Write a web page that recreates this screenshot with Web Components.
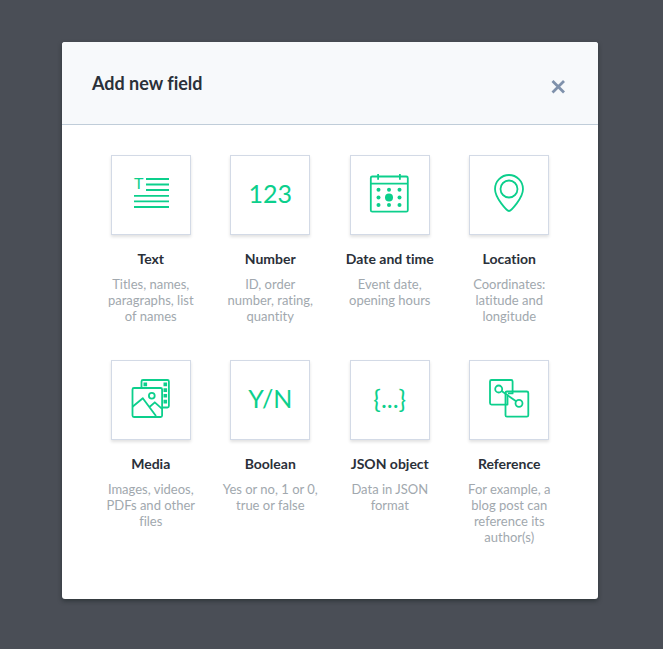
<!DOCTYPE html>
<html lang="en">
<head>
<meta charset="utf-8">
<meta name="viewport" content="width=device-width, initial-scale=1">
<title>Add new field</title>
<style>
	body {
		margin: 0;
		min-height: 100vh;
		background: #4a4e56;
		font-family: Lato, "Liberation Sans", sans-serif;
		font-variant-ligatures: none;
	}
	svg {
		display: block;
		width: 48px;
		height: 48px;
		fill: none;
		stroke: #0ccf8c;
		stroke-width: 1.8;
		stroke-linejoin: round;
	}
	svg .solid {
		fill: #0ccf8c;
		stroke: none;
	}
	svg text {
		font-size: 16px;
		font-weight: 400;
	}
</style>
</head>
<body>
<modal-dialog heading="Add new field">
	<field-grid>
		<field-type label="Text" description="Titles, names, paragraphs, list of names">
			<svg viewBox="16 16 48 48" aria-hidden="true">
				<text class="solid" x="23" y="34">T</text>
				<path d="M35 24h23M35 29.5h23M35 35h23M23 40.8h35M23 46.4h35M23 52h35"/>
			</svg>
		</field-type>
		<field-type label="Number" description="ID, order number, rating, quantity"><field-sign>123</field-sign></field-type>
		<field-type label="Date and time" description="Event date, opening hours">
			<svg viewBox="16.5 16 48 48" aria-hidden="true">
				<rect x="21.3" y="21.5" width="37" height="35.2" rx="1.5"/>
				<path d="M21.3 28.7h37M28.6 19v5.8M50.4 19v5.8"/>
				<g class="solid">
					<circle cx="29" cy="34.7" r="2"/>
					<circle cx="39.5" cy="34.7" r="2"/>
					<circle cx="50" cy="34.7" r="2"/>
					<circle cx="29" cy="42.4" r="2"/>
					<circle cx="39.5" cy="42.4" r="4"/>
					<circle cx="50" cy="42.4" r="2"/>
					<circle cx="29" cy="50" r="2"/>
					<circle cx="39.5" cy="50" r="2"/>
					<circle cx="50" cy="50" r="2"/>
				</g>
			</svg>
		</field-type>
		<field-type label="Location" description="Coordinates: latitude and longitude">
			<svg viewBox="16 16 48 48" aria-hidden="true">
				<path d="M40 56C38 56 26 43 26 34a14 14 0 0 1 28 0C54 43 42 56 40 56z"/>
				<circle cx="40" cy="34" r="8.5"/>
			</svg>
		</field-type>
		<field-type label="Media" description="Images, videos, PDFs and other files">
			<svg viewBox="16.5 16 48 48" aria-hidden="true">
				<rect x="22" y="28" width="29.6" height="29" rx="1.5"/>
				<path d="M31 28v-6.5q0-1.5 1.5-1.5h24.4q1.5 0 1.5 1.5V46q0 1.5-1.5 1.5H52"/>
				<path d="M22 46.8l10.3-8.6L45.5 56M39 47l5.3-4.7 7.3 6.5"/>
				<circle cx="41.3" cy="35.7" r="2.9"/>
				<path class="solid" d="M33 22.6h3.6v3.6H33zM53 22.6h3.6v3.6H53zM53 28.3h3.6v3.6H53zM53 34h3.6v3.6H53zM53 39.8h3.6v3.6H53z"/>
			</svg>
		</field-type>
		<field-type label="Boolean" description="Yes or no, 1 or 0, true or false"><field-sign>Y/N</field-sign></field-type>
		<field-type label="JSON object" description="Data in JSON format"><field-sign>{...}</field-sign></field-type>
		<field-type label="Reference" description="For example, a blog post can reference its author(s)">
			<svg viewBox="16 16 48 48" aria-hidden="true">
				<path d="M39 33.4h4.6V21.5q0-1.5-1.5-1.5H22.5Q21 20 21 21.5v21.6q0 1.5 1.5 1.5h16V36"/>
				<rect x="36.5" y="31.5" width="22.8" height="25.2" rx="1.5"/>
				<circle cx="29.7" cy="29" r="3.5"/>
				<circle cx="50" cy="43.3" r="3.5"/>
				<path d="M32.6 31l14.5 10.3"/>
			</svg>
		</field-type>
	</field-grid>
</modal-dialog>

<script>
class ModalDialog extends HTMLElement {
	constructor() {
		super();

		const shadowRoot = this.attachShadow({ mode: 'open' });
		shadowRoot.innerHTML = /*html*/`
			<style>
				:host {
					display: block;
					padding: 42px 65px 50px 62px;
				}
				section {
					background: #fff;
					border-radius: 3px;
					box-shadow: 0 2px 4px rgba(20, 30, 30, .5);
					overflow: hidden;
				}
				header {
					display: flex;
					align-items: center;
					justify-content: space-between;
					padding: 28px 30px;
					background: #f7f9fb;
					border-bottom: 1px solid #c0cdd9;
				}
				h1 {
					margin: 0;
					font-size: 18px;
					line-height: 26px;
					font-weight: 700;
					color: #2a3039;
				}
				button {
					display: flex;
					padding: 6px 0 0;
					border: 0;
					background: none;
					cursor: pointer;
				}
				svg {
					width: 20px;
					height: 20px;
					fill: none;
					stroke: #7f91ab;
					stroke-width: 2.8;
				}
			</style>
			<section role="dialog" aria-labelledby="heading">
				<header>
					<h1 id="heading"></h1>
					<button type="button" aria-label="Close">
						<svg viewBox="0 0 20 20" aria-hidden="true"><path d="M4.5 5l11.5 11.5M16 5L4.5 16.5"/></svg>
					</button>
				</header>
				<slot></slot>
			</section>
		`;
		this.heading = shadowRoot.querySelector('#heading');
		this.closeButton = shadowRoot.querySelector('button');
		this.close = this.close.bind(this);
	}

	connectedCallback() {
		this.heading.textContent = this.getAttribute('heading');
		this.closeButton.addEventListener('click', this.close);
	}

	close() {
		this.dispatchEvent(new CustomEvent('closeDialog', { bubbles: true }));
	}
}

class FieldGrid extends HTMLElement {
	constructor() {
		super();

		const shadowRoot = this.attachShadow({ mode: 'open' });
		shadowRoot.innerHTML = /*html*/`
			<style>
				:host {
					display: grid;
					grid-template-columns: repeat(auto-fit, minmax(112px, 1fr));
					row-gap: 36px;
					padding: 30px 29px 54px;
				}
			</style>
			<slot></slot>
		`;
	}
}

// Short piece of text that stands in for an icon
class FieldSign extends HTMLElement {
	constructor() {
		super();

		const shadowRoot = this.attachShadow({ mode: 'open' });
		shadowRoot.innerHTML = /*html*/`
			<style>
				:host {
					display: block;
					padding-bottom: 4px;
					font-size: 25px;
					line-height: 32px;
					font-weight: 400;
					color: #0ccf8c;
				}
			</style>
			<slot></slot>
		`;
	}
}

class FieldType extends HTMLElement {
	constructor() {
		super();

		const shadowRoot = this.attachShadow({ mode: 'open' });
		shadowRoot.innerHTML = /*html*/`
			<style>
				:host {
					display: flex;
					flex-direction: column;
					align-items: center;
					text-align: center;
				}
				button {
					display: flex;
					align-items: center;
					justify-content: center;
					box-sizing: border-box;
					width: 80px;
					height: 80px;
					padding: 0;
					border: 1px solid #d3dae6;
					background: #fff;
					box-shadow: 0 2px 3px rgba(0, 0, 0, .12);
					font-family: inherit;
					cursor: pointer;
				}
				h2 {
					margin: 14px 0 7px;
					font-size: 14px;
					line-height: 20px;
					font-weight: 700;
					color: #2a3039;
				}
				p {
					margin: 0;
					max-width: 98px;
					font-size: 13px;
					line-height: 16px;
					color: #a1a8ae;
				}
			</style>
			<button type="button" aria-labelledby="label" aria-describedby="description"><slot></slot></button>
			<h2 id="label"></h2>
			<p id="description"></p>
		`;
		this.label = shadowRoot.querySelector('#label');
		this.description = shadowRoot.querySelector('#description');
		this.button = shadowRoot.querySelector('button');
		this.select = this.select.bind(this);
	}

	connectedCallback() {
		this.label.textContent = this.getAttribute('label');
		this.description.textContent = this.getAttribute('description');
		this.button.addEventListener('click', this.select);
	}

	select() {
		this.dispatchEvent(new CustomEvent('selectField', {
			bubbles: true,
			detail: {
				label: this.getAttribute('label')
			}
		}));
	}
}

customElements.define('modal-dialog', ModalDialog);
customElements.define('field-grid', FieldGrid);
customElements.define('field-sign', FieldSign);
customElements.define('field-type', FieldType);
</script>
</body>
</html>
